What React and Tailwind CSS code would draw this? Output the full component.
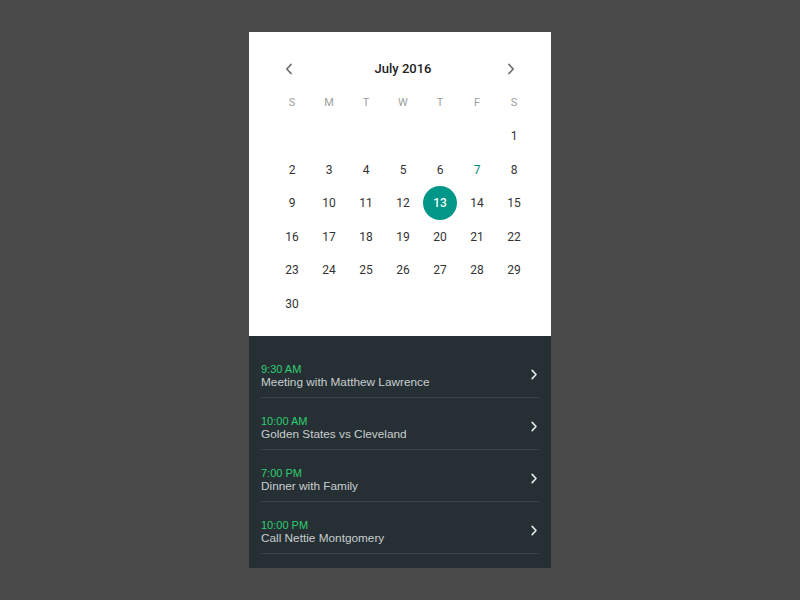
import { useState } from "react";

const DAYS = ["S", "M", "T", "W", "T", "F", "S"];

const EVENTS = [
  { time: "9:30 AM", title: "Meeting with Matthew Lawrence" },
  { time: "10:00 AM", title: "Golden States vs Cleveland" },
  { time: "7:00 PM", title: "Dinner with Family" },
  { time: "10:00 PM", title: "Call Nettie Montgomery" },
];

function Chevron({ dir = "right", className = "" }) {
  return (
    <svg viewBox="0 0 8 12" className={className} fill="none" stroke="currentColor" strokeWidth="1.8" strokeLinecap="round" strokeLinejoin="round">
      {dir === "left" ? <polyline points="6,1.5 1.8,6 6,10.5" /> : <polyline points="2,1.5 6.2,6 2,10.5" />}
    </svg>
  );
}

export default function App() {
  const [selected, setSelected] = useState(13);
  // 1 sits on the Saturday column, as in the design
  const cells = [...Array(6).fill(null), ...Array.from({ length: 30 }, (_, i) => i + 1)];

  return (
    <div className="min-h-screen w-full bg-[#4a4a4a] pt-[32px] font-['Roboto',sans-serif]">
      <div className="mx-auto w-[302px]">
        <section className="bg-white pt-[25px] pb-[15.5px] pl-[24.5px]">
          <div className="grid w-[259px] grid-cols-7 items-center h-[24px]">
            <button className="flex justify-center pr-[6px] text-[#6f6f6f]">
              <Chevron dir="left" className="w-[8px] h-[12px]" />
            </button>
            <div className="col-span-5 text-center text-[13px] font-medium text-[#222]">July 2016</div>
            <button className="flex justify-center pr-[6px] text-[#6f6f6f]">
              <Chevron className="w-[8px] h-[12px]" />
            </button>
          </div>

          <div className="mt-[5px] grid w-[259px] grid-cols-7">
            {DAYS.map((d, i) => (
              <div key={i} className="flex h-[33.5px] items-center justify-center text-[11px] text-[#9e9e9e]">
                {d}
              </div>
            ))}
            {cells.map((n, i) => (
              <div key={i} className="flex h-[33.5px] items-center justify-center">
                {n && (
                  <button
                    onClick={() => setSelected(n)}
                    className={
                      n === selected
                        ? "flex h-[34px] w-[34px] items-center justify-center rounded-full bg-[#009688] text-[12px] font-medium text-white"
                        : n === 7
                        ? "text-[12px] text-[#00897b]"
                        : "text-[12px] text-[#333]"
                    }
                  >
                    {n}
                  </button>
                )}
              </div>
            ))}
          </div>
        </section>

        <section className="bg-[#263034] px-[12px] pt-[10px] pb-[14px] font-['Liberation_Sans',Arial,sans-serif]">
          {EVENTS.map((e) => (
            <div key={e.time} className="flex items-center border-b border-[#38434a] pt-[16px] pb-[8px]">
              <div className="flex-1">
                <div className="text-[11px] leading-[14px] text-[#2ecc71]">{e.time}</div>
                <div className="text-[11.8px] leading-[13px] text-[#c9ced1]">{e.title}</div>
              </div>
              <Chevron className="mr-[1px] mt-[-3px] h-[11px] w-[8px] text-[#e6e6e6]" />
            </div>
          ))}
        </section>
      </div>
    </div>
  );
}
